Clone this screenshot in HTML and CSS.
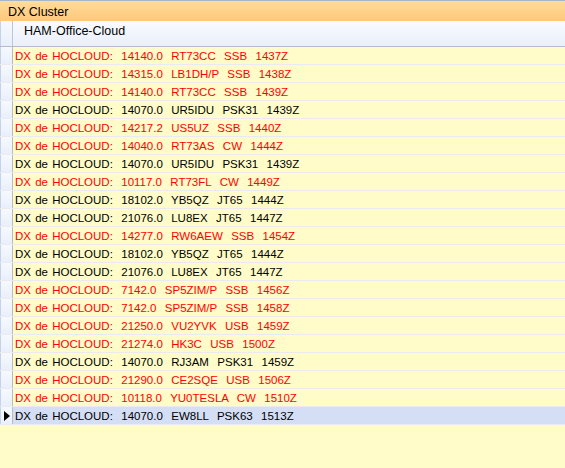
FILE: index.html
```html
<!DOCTYPE html>
<html lang="en">
<head>
  <meta charset="UTF-8" />
  <title>DX Cluster</title>
  <link rel="stylesheet" href="styles.css">
</head>
<body>

  <div class="panel">
    <div class="titlebar">DX Cluster</div>

    <div class="grid">
      <div class="row head">
        <div class="rowhead"></div>
        <div class="cell">HAM-Office-Cloud</div>
      </div>

      <div class="row red"><div class="rowhead"></div><div class="cell">DX de HOCLOUD:  14140.0  RT73CC  SSB  1437Z</div></div>
      <div class="row red"><div class="rowhead"></div><div class="cell">DX de HOCLOUD:  14315.0  LB1DH/P  SSB  1438Z</div></div>
      <div class="row red"><div class="rowhead"></div><div class="cell">DX de HOCLOUD:  14140.0  RT73CC  SSB  1439Z</div></div>
      <div class="row"><div class="rowhead"></div><div class="cell">DX de HOCLOUD:  14070.0  UR5IDU  PSK31  1439Z</div></div>
      <div class="row red"><div class="rowhead"></div><div class="cell">DX de HOCLOUD:  14217.2  US5UZ  SSB  1440Z</div></div>
      <div class="row red"><div class="rowhead"></div><div class="cell">DX de HOCLOUD:  14040.0  RT73AS  CW  1444Z</div></div>
      <div class="row"><div class="rowhead"></div><div class="cell">DX de HOCLOUD:  14070.0  UR5IDU  PSK31  1439Z</div></div>
      <div class="row red"><div class="rowhead"></div><div class="cell">DX de HOCLOUD:  10117.0  RT73FL  CW  1449Z</div></div>
      <div class="row"><div class="rowhead"></div><div class="cell">DX de HOCLOUD:  18102.0  YB5QZ  JT65  1444Z</div></div>
      <div class="row"><div class="rowhead"></div><div class="cell">DX de HOCLOUD:  21076.0  LU8EX  JT65  1447Z</div></div>
      <div class="row red"><div class="rowhead"></div><div class="cell">DX de HOCLOUD:  14277.0  RW6AEW  SSB  1454Z</div></div>
      <div class="row"><div class="rowhead"></div><div class="cell">DX de HOCLOUD:  18102.0  YB5QZ  JT65  1444Z</div></div>
      <div class="row"><div class="rowhead"></div><div class="cell">DX de HOCLOUD:  21076.0  LU8EX  JT65  1447Z</div></div>
      <div class="row red"><div class="rowhead"></div><div class="cell">DX de HOCLOUD:  7142.0  SP5ZIM/P  SSB  1456Z</div></div>
      <div class="row red"><div class="rowhead"></div><div class="cell">DX de HOCLOUD:  7142.0  SP5ZIM/P  SSB  1458Z</div></div>
      <div class="row red"><div class="rowhead"></div><div class="cell">DX de HOCLOUD:  21250.0  VU2YVK  USB  1459Z</div></div>
      <div class="row red"><div class="rowhead"></div><div class="cell">DX de HOCLOUD:  21274.0  HK3C  USB  1500Z</div></div>
      <div class="row"><div class="rowhead"></div><div class="cell">DX de HOCLOUD:  14070.0  RJ3AM  PSK31  1459Z</div></div>
      <div class="row red"><div class="rowhead"></div><div class="cell">DX de HOCLOUD:  21290.0  CE2SQE  USB  1506Z</div></div>
      <div class="row red"><div class="rowhead"></div><div class="cell">DX de HOCLOUD:  10118.0  YU0TESLA  CW  1510Z</div></div>
      <div class="row selected"><div class="rowhead"><span class="arrow"></span></div><div class="cell">DX de HOCLOUD:  14070.0  EW8LL  PSK63  1513Z</div></div>
    </div>
  </div>

</body>
</html>
```

FILE: styles.css
```css
* {
  box-sizing: border-box;
  margin: 0;
  padding: 0;
}

body {
  font-family: 'Liberation Sans', Arial, sans-serif;
  font-size: 11.5px;
  background: #fffcc9;
  color: #000;
  width: 565px;
  height: 468px;
  overflow: hidden;
}

.titlebar {
  height: 21px;
  border-top: 1px solid #a9b5c9;
  background: linear-gradient(to bottom, #ffdc9e, #ffc878);
  font-size: 12.5px;
  line-height: 20px;
  padding: 1px 0 0 8px;
}

.row {
  display: flex;
  height: 18px;
  border-bottom: 1px solid #ebeaf0;
}

.rowhead {
  width: 13px;
  flex: none;
  border-left: 1px solid #c5d3ea;
  border-right: 1px solid #b5bcc8;
  background: linear-gradient(to bottom, #f6f9ff, #e9effb);
  display: flex;
  align-items: center;
  justify-content: center;
}

.cell {
  flex: 1;
  white-space: pre;
  word-spacing: 1px;
  line-height: 17px;
  padding: 1px 0 0 2px;
}

.row.head {
  height: 26px;
  border-bottom: 1px solid #b5bcc8;
  background: linear-gradient(to bottom, #f9fbff, #e9effb);
}

.row.head .rowhead {
  border-right-color: #c0c6d0;
}

.row.head .cell {
  font-size: 12.5px;
  word-spacing: 0;
  line-height: 21px;
  padding: 0 0 0 11px;
}

.row.red .cell {
  color: #ff0000;
}

.row.selected .cell {
  background: #d4def4;
}

.arrow {
  width: 0;
  height: 0;
  border-top: 5px solid transparent;
  border-bottom: 5px solid transparent;
  border-left: 6px solid #000;
  margin-left: 1px;
}
```
